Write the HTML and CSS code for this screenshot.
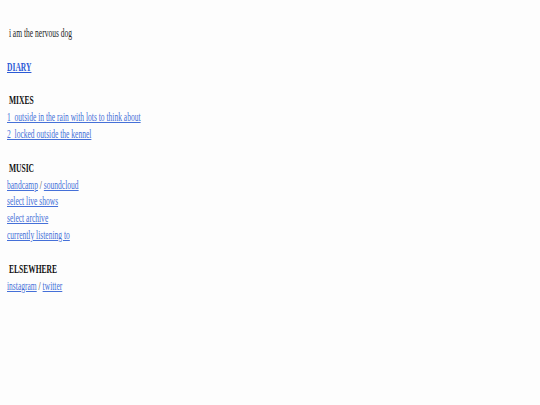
FILE: index.html
```html
<!DOCTYPE html>
<html>
<head>
<meta charset="utf-8">
<link rel="stylesheet" href="styles.css">
</head>
<body>
<div class="page">
  <p class="intro">&nbsp;i am the nervous dog</p>
  <p class="section"><a class="diary" href="#">DIARY</a></p>
  <div class="section">
    <h2 class="head">&nbsp;MIXES</h2>
    <div><a href="#">1_outside in the rain with lots to think about</a></div>
    <div><a href="#">2_locked outside the kennel</a></div>
  </div>
  <div class="section">
    <h2 class="head">&nbsp;MUSIC</h2>
    <div><a href="#">bandcamp</a> / <a href="#">soundcloud</a></div>
    <div><a href="#">select live shows</a></div>
    <div><a href="#">select archive</a></div>
    <div><a href="#">currently listening to</a></div>
  </div>
  <div class="section">
    <h2 class="head">&nbsp;ELSEWHERE</h2>
    <div><a href="#">instagram</a> / <a href="#">twitter</a></div>
  </div>
</div>
</body>
</html>
```

FILE: styles.css
```css
html, body {
  margin: 0;
  background: #fdfdfd;
}
body {
  padding: 25px 7px 0;
}
.page {
  font-family: "Liberation Serif", "Times New Roman", serif;
  font-size: 13px;
  line-height: 16.85px;
  color: #1e1e1e;
  transform: scaleX(0.58);
  transform-origin: 0 0;
  white-space: nowrap;
}
.intro {
  margin: 0;
}
.section {
  margin: 16.85px 0 0;
}
.head {
  margin: 0;
  font-size: 13px;
  line-height: 16.85px;
  font-weight: bold;
  color: #111;
}
a {
  color: #4570d8;
  text-decoration: underline;
}
.diary {
  font-weight: bold;
  color: #2b5ad6;
}
```
